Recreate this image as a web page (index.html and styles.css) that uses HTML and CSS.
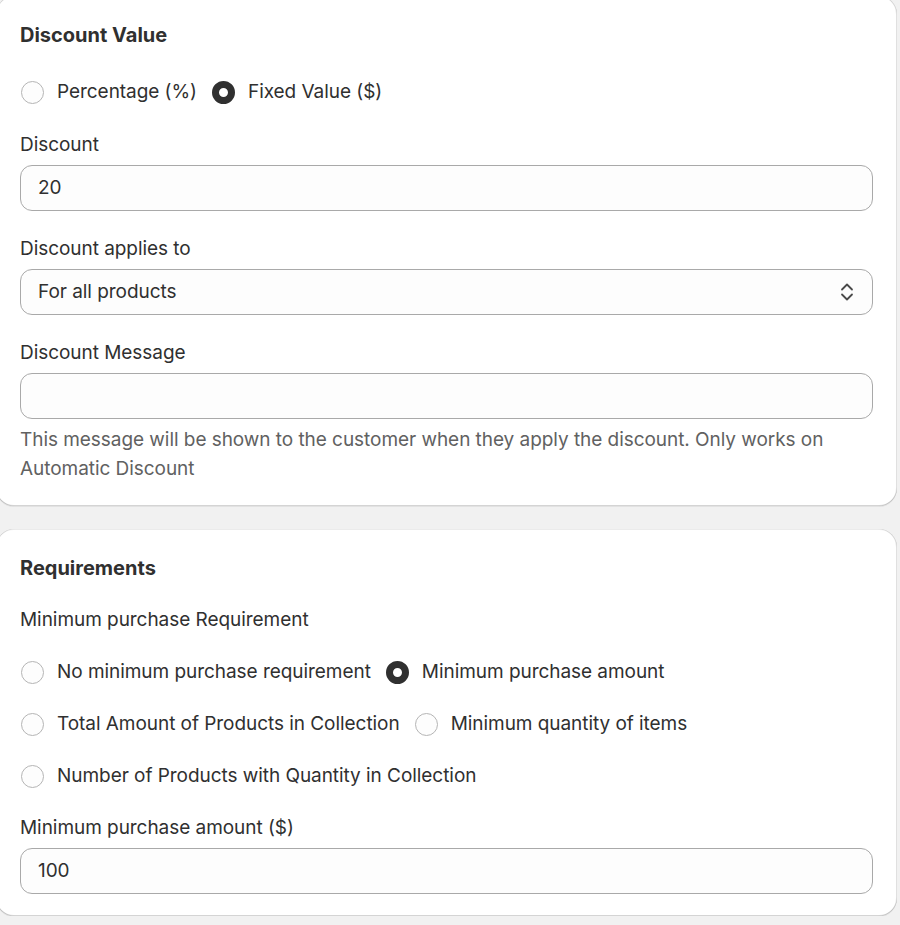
FILE: index.html
```html
<!DOCTYPE html>
<html lang="en">
<head>
<meta charset="utf-8">
<title>Discount settings</title>
<link rel="stylesheet" href="styles.css">
</head>
<body>
<main class="page">
  <section class="card card-value">
    <h2 class="card-title">Discount Value</h2>
    <div class="choices choices-first">
      <label class="choice"><span class="radio"></span><span class="choice-label">Percentage (%)</span></label>
      <label class="choice"><span class="radio radio-on"></span><span class="choice-label">Fixed Value ($)</span></label>
    </div>
    <div class="field">
      <div class="field-label">Discount</div>
      <div class="input"><span class="input-text">20</span></div>
    </div>
    <div class="field">
      <div class="field-label">Discount applies to</div>
      <div class="input select">
        <span class="input-text">For all products</span>
        <svg class="chevrons" width="16" height="24" viewBox="0 0 16 24" aria-hidden="true">
          <path d="M3 9.5 L8 4.5 L13 9.5" fill="none" stroke="#4a4a4a" stroke-width="1.8" stroke-linecap="round" stroke-linejoin="round"/>
          <path d="M3 14.5 L8 19.5 L13 14.5" fill="none" stroke="#4a4a4a" stroke-width="1.8" stroke-linecap="round" stroke-linejoin="round"/>
        </svg>
      </div>
    </div>
    <div class="field">
      <div class="field-label">Discount Message</div>
      <div class="input"></div>
      <p class="help">This message will be shown to the customer when they apply the discount. Only works on Automatic Discount</p>
    </div>
  </section>

  <section class="card card-req">
    <h2 class="card-title">Requirements</h2>
    <div class="field-label req-label">Minimum purchase Requirement</div>
    <div class="choices choices-wrap">
      <label class="choice"><span class="radio"></span><span class="choice-label">No minimum purchase requirement</span></label>
      <label class="choice"><span class="radio radio-on"></span><span class="choice-label">Minimum purchase amount</span></label>
      <label class="choice"><span class="radio"></span><span class="choice-label">Total Amount of Products in Collection</span></label>
      <label class="choice"><span class="radio"></span><span class="choice-label">Minimum quantity of items</span></label>
      <label class="choice"><span class="radio"></span><span class="choice-label">Number of Products with Quantity in Collection</span></label>
    </div>
    <div class="field field-last">
      <div class="field-label">Minimum purchase amount ($)</div>
      <div class="input"><span class="input-text">100</span></div>
    </div>
  </section>
</main>
</body>
</html>
```

FILE: styles.css
```css
* { box-sizing: border-box; }

html, body {
  margin: 0;
  padding: 0;
  background: #f1f1f1;
}

body {
  font-family: Inter, "Noto Sans", "Liberation Sans", sans-serif;
  font-size: 19px;
  letter-spacing: -0.05px;
  line-height: 30px;
  color: #303030;
}

.page {
  width: 901px;
  margin: -4px 0 0 -4px;
  display: flex;
  flex-direction: column;
  gap: 23px;
}

.card {
  background: #ffffff;
  border-radius: 18px;
  padding: 24px 24px 23px;
  box-shadow:
    0 1px 0 0 rgba(26, 26, 26, 0.07),
    inset 0 -1px 0 0 rgba(0, 0, 0, 0.17),
    inset 1px 0 0 0 rgba(0, 0, 0, 0.12),
    inset -1px 0 0 0 rgba(0, 0, 0, 0.12),
    inset 0 1px 0 0 rgba(0, 0, 0, 0.08);
}

.card-req { padding-bottom: 22px; }

.card-title {
  margin: 0;
  font-size: 20px;
  letter-spacing: 0;
  line-height: 30px;
  font-weight: 650;
  color: #303030;
}

.choices {
  display: flex;
  flex-wrap: wrap;
  column-gap: 14px;
  row-gap: 22px;
}

.choices-first { margin-top: 27px; }

.choice {
  display: flex;
  align-items: center;
  gap: 13px;
  height: 30px;
  padding-left: 1px;
}

.radio {
  width: 23px;
  height: 23px;
  border-radius: 50%;
  border: 1px solid #b5b5b5;
  background: #fdfdfd;
  flex: none;
}

.radio-on {
  border: 7px solid #303030;
  background: #ffffff;
}

.choice-label { white-space: nowrap; }

.field { margin-top: 23px; }

.field-label {
  line-height: 30px;
}

.input {
  margin-top: 5px;
  height: 46px;
  border: 1px solid #a9a9a9;
  border-radius: 12px;
  background: #fdfdfd;
  display: flex;
  align-items: center;
  padding: 0 17px;
}

.select {
  justify-content: space-between;
  padding-right: 17px;
}

.chevrons { flex: none; }

.help {
  margin: 6px 0 0;
  line-height: 29px;
  color: #616161;
}

.req-label { margin-top: 22px; }

.card-req .choices-wrap {
  margin-top: 22px;
  width: 700px;
}

.card-req .field-last { margin-top: 22px; }
```
